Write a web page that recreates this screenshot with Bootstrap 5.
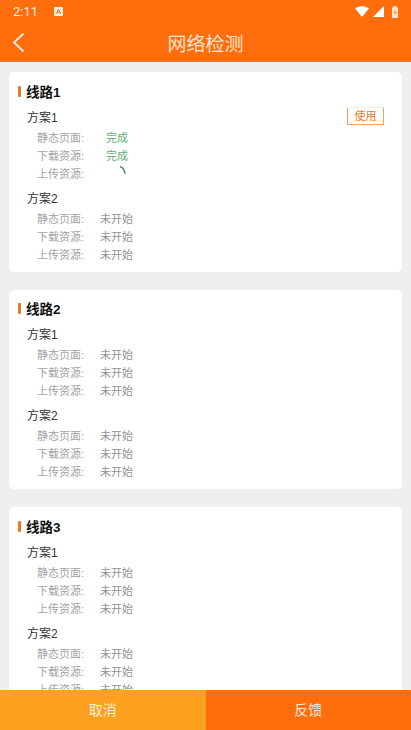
<!DOCTYPE html>
<html lang="zh"><head><meta charset="utf-8">
<link rel="stylesheet" href="https://cdn.jsdelivr.net/npm/bootstrap@5.3.0/dist/css/bootstrap.min.css">
<style>
html,body{height:730px;overflow:hidden}
body{font-family:"Liberation Sans","Noto Sans CJK SC",sans-serif;background:#efefef}
.screen{height:730px}
.topbar{background:#ff6d0c;height:62px;color:#fff;flex:none}
.statusrow{height:23px;padding:0 13px;font-size:13px;font-family:Roboto,sans-serif;color:#fdeee2}
.titlerow{height:39px;padding-left:12px}
.pagetitle{font-size:19px;line-height:39px;color:#fde6d2;left:0;right:0;top:2px}
.scrollzone{min-height:0;overflow:hidden;padding:10px 9px 0}
.linecard{background:#fff;border-radius:5px;height:199.5px;margin-bottom:18px;padding:10.5px 8px 0 9px;flex:none}
.linehead{font-size:13.5px;font-weight:700;line-height:20px;color:#111;height:20px}
.linehead::before{content:"";display:inline-block;width:3px;height:11px;background:#e8792b;border-radius:1px;margin-right:5px;vertical-align:0}
.plan{padding-left:9px}
.planhead{font-size:12px;color:#333;height:21px;line-height:20px;margin-top:5px}
.plan + .plan .planhead{margin-top:6px}
.usebtn{border:1px solid #e8a26a;border-top-color:#fbe9da;color:#e07b2c;font-size:11px;line-height:15px;width:37px;height:18px;border-radius:1px;margin-right:10px;padding:0;margin-top:-.5px}
.probe{font-size:11px;height:18px;line-height:18px;color:#a3a3a3;padding-left:10px}
.probe-label{width:63px;flex:none}
.probe-done{color:#5bb070;padding-left:6px}
.probe-wait{color:#929292}
.spinbox{padding:1.5px 0 0 20px;height:18px}
.spinmark{display:block}
.bottombar{height:40px;flex:none;font-size:14px;color:#fdeedd}
.cancelbtn{background:#ffa11e}
.feedbackbtn{background:#ff6d0c}
</style></head><body>
<div class="screen d-flex flex-column">
 <div class="topbar">
  <div class="statusrow d-flex align-items-center">
   <span>2:11</span>
   <svg class="ms-3" width="9" height="9" viewBox="0 0 9 9"><rect width="9" height="9" rx="1" fill="#fdeee2"/><path d="M2.5 7 4.5 2l2 5M3.3 5.4h2.4" stroke="#ff6d0c" fill="none"/></svg>
   <span class="ms-auto d-flex align-items-center gap-1">
    <svg width="14" height="11" viewBox="0 0 14 11"><path d="M0 2.5Q7-2 14 2.5L7 11Z" fill="#fff"/></svg>
    <svg width="11" height="11" viewBox="0 0 11 11"><path d="M11 0V11H0Z" fill="#fff"/></svg>
    <svg class="ms-1" width="6" height="12" viewBox="0 0 6 12"><path d="M1.5 0h3v1.500H6V12H0V1.500h1.500Z" fill="#fde3cd"/><path d="M3.500 3 2 7h1.500L2.700 10 4.500 6H3Z" fill="#ff6d0c"/></svg>
   </span>
  </div>
  <div class="titlerow position-relative d-flex align-items-center">
   <svg width="13" height="21" viewBox="0 0 13 21"><path d="M11.500 1.500 2 10.500l9.500 9" stroke="#fdeee2" stroke-width="1.800" fill="none"/></svg>
   <div class="pagetitle position-absolute text-center">网络检测</div>
  </div>
 </div>
 <div class="scrollzone flex-grow-1 d-flex flex-column">
  <div class="linecard">
   <div class="linehead">线路1</div>
   <div class="plan">
    <div class="planhead d-flex justify-content-between align-items-start"><span>方案1</span><button class="usebtn btn bg-white">使用</button></div>
    <div class="probe d-flex"><span class="probe-label">静态页面:</span><span class="probe-done">完成</span></div>
    <div class="probe d-flex"><span class="probe-label">下载资源:</span><span class="probe-done">完成</span></div>
    <div class="probe d-flex"><span class="probe-label">上传资源:</span><span class="spinbox"><svg class="spinmark" width="6" height="8" viewBox="0 0 6 8"><path d="M0 .8Q3.800 1.200 5 7.500" stroke="#3f8f5f" stroke-width="1.500" fill="none"/></svg></span></div>
   </div>
   <div class="plan">
    <div class="planhead">方案2</div>
    <div class="probe d-flex"><span class="probe-label">静态页面:</span><span class="probe-wait">未开始</span></div>
    <div class="probe d-flex"><span class="probe-label">下载资源:</span><span class="probe-wait">未开始</span></div>
    <div class="probe d-flex"><span class="probe-label">上传资源:</span><span class="probe-wait">未开始</span></div>
   </div>
  </div>
  <div class="linecard">
   <div class="linehead">线路2</div>
   <div class="plan">
    <div class="planhead">方案1</div>
    <div class="probe d-flex"><span class="probe-label">静态页面:</span><span class="probe-wait">未开始</span></div>
    <div class="probe d-flex"><span class="probe-label">下载资源:</span><span class="probe-wait">未开始</span></div>
    <div class="probe d-flex"><span class="probe-label">上传资源:</span><span class="probe-wait">未开始</span></div>
   </div>
   <div class="plan">
    <div class="planhead">方案2</div>
    <div class="probe d-flex"><span class="probe-label">静态页面:</span><span class="probe-wait">未开始</span></div>
    <div class="probe d-flex"><span class="probe-label">下载资源:</span><span class="probe-wait">未开始</span></div>
    <div class="probe d-flex"><span class="probe-label">上传资源:</span><span class="probe-wait">未开始</span></div>
   </div>
  </div>
  <div class="linecard">
   <div class="linehead">线路3</div>
   <div class="plan">
    <div class="planhead">方案1</div>
    <div class="probe d-flex"><span class="probe-label">静态页面:</span><span class="probe-wait">未开始</span></div>
    <div class="probe d-flex"><span class="probe-label">下载资源:</span><span class="probe-wait">未开始</span></div>
    <div class="probe d-flex"><span class="probe-label">上传资源:</span><span class="probe-wait">未开始</span></div>
   </div>
   <div class="plan">
    <div class="planhead">方案2</div>
    <div class="probe d-flex"><span class="probe-label">静态页面:</span><span class="probe-wait">未开始</span></div>
    <div class="probe d-flex"><span class="probe-label">下载资源:</span><span class="probe-wait">未开始</span></div>
    <div class="probe d-flex"><span class="probe-label">上传资源:</span><span class="probe-wait">未开始</span></div>
   </div>
  </div>
 </div>
 <div class="bottombar row g-0 text-center">
  <div class="col-6 cancelbtn d-flex align-items-center justify-content-center">取消</div>
  <div class="col-6 feedbackbtn d-flex align-items-center justify-content-center">反馈</div>
 </div>
</div>
<script src="https://cdn.jsdelivr.net/npm/bootstrap@5.3.0/dist/js/bootstrap.bundle.min.js"></script>
</body></html>
